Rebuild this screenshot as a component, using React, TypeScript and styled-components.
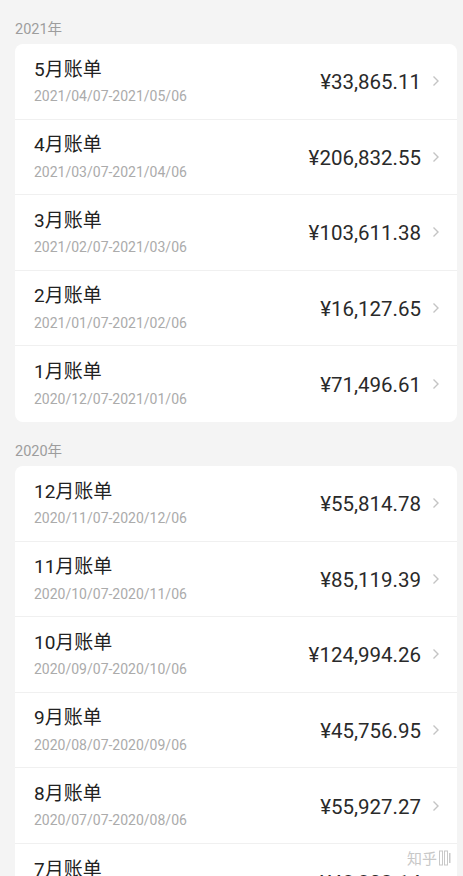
import React from "react";
import styled, { createGlobalStyle } from "styled-components";

interface Bill {
  month: string;
  range: string;
  amount: string;
}

const sections: { year: string; bills: Bill[] }[] = [
  {
    year: "2021年",
    bills: [
      { month: "5月账单", range: "2021/04/07-2021/05/06", amount: "¥33,865.11" },
      { month: "4月账单", range: "2021/03/07-2021/04/06", amount: "¥206,832.55" },
      { month: "3月账单", range: "2021/02/07-2021/03/06", amount: "¥103,611.38" },
      { month: "2月账单", range: "2021/01/07-2021/02/06", amount: "¥16,127.65" },
      { month: "1月账单", range: "2020/12/07-2021/01/06", amount: "¥71,496.61" },
    ],
  },
  {
    year: "2020年",
    bills: [
      { month: "12月账单", range: "2020/11/07-2020/12/06", amount: "¥55,814.78" },
      { month: "11月账单", range: "2020/10/07-2020/11/06", amount: "¥85,119.39" },
      { month: "10月账单", range: "2020/09/07-2020/10/06", amount: "¥124,994.26" },
      { month: "9月账单", range: "2020/08/07-2020/09/06", amount: "¥45,756.95" },
      { month: "8月账单", range: "2020/07/07-2020/08/06", amount: "¥55,927.27" },
      { month: "7月账单", range: "2020/06/07-2020/07/06", amount: "¥48,302.14" },
    ],
  },
];

const GlobalStyle = createGlobalStyle`
  html, body {
    margin: 0;
    padding: 0;
    background: #f4f4f4;
    font-family: Roboto, "Noto Sans CJK SC", "Noto Sans", sans-serif;
  }
`;

const App: React.FC = () => {
  return (
    <>
      <GlobalStyle />
      <Page>
        {sections.map((s) => (
          <Section key={s.year}>
            <YearLabel>{s.year}</YearLabel>
            <Card>
              {s.bills.map((b) => (
                <Row key={b.month}>
                  <Info>
                    <Month>{b.month}</Month>
                    <Range>{b.range}</Range>
                  </Info>
                  <Amount>{b.amount}</Amount>
                  <Chevron viewBox="0 0 8 12">
                    <path d="M1.5 1.5 L6 6 L1.5 10.5" fill="none" stroke="#c4c4c4" strokeWidth="1.4" />
                  </Chevron>
                </Row>
              ))}
            </Card>
          </Section>
        ))}
        <Watermark>
          知乎
          <svg width="12" height="16" viewBox="0 0 12 16">
            <rect x="0.5" y="1" width="3" height="14" fill="none" stroke="#c8c8c8" strokeWidth="1" />
            <rect x="5.5" y="1" width="3" height="14" fill="none" stroke="#c8c8c8" strokeWidth="1" />
            <rect x="10" y="3" width="1.5" height="10" fill="#c8c8c8" />
          </svg>
        </Watermark>
      </Page>
    </>
  );
};

export default App;

const Page = styled.div`
  position: relative;
  width: 463px;
  height: 876px;
  overflow: hidden;
  box-sizing: border-box;
  padding: 0 6px 0 15px;
`;

const Section = styled.section`
  display: flex;
  flex-direction: column;
`;

const YearLabel = styled.div`
  height: 44px;
  box-sizing: border-box;
  padding-top: 20px;
  font-size: 14.5px;
  line-height: 20px;
  color: #9d9d9d;
`;

const Card = styled.div`
  background: #ffffff;
  border-radius: 8px;
  overflow: hidden;
`;

const Row = styled.div`
  height: 75.6px;
  box-sizing: border-box;
  display: flex;
  align-items: center;
  padding: 0 17px 0 19px;
  border-bottom: 1px solid #f0f0f0;

  &:last-child {
    border-bottom: none;
  }
`;

const Info = styled.div`
  flex: 1;
  display: flex;
  flex-direction: column;
  gap: 6.5px;
`;

const Month = styled.div`
  font-size: 19px;
  line-height: 24px;
  color: #222222;
`;

const Range = styled.div`
  font-size: 14px;
  line-height: 17px;
  color: #ababab;
`;

const Amount = styled.div`
  font-size: 20.5px;
  color: #2a2a2a;
  margin-right: 11px;
  padding-top: 2px;
`;

const Chevron = styled.svg`
  width: 8px;
  height: 12px;
  flex-shrink: 0;
`;

const Watermark = styled.div`
  position: absolute;
  right: 12px;
  bottom: 8px;
  display: flex;
  align-items: center;
  gap: 2px;
  font-size: 15px;
  color: #c8c8c8;
`;
